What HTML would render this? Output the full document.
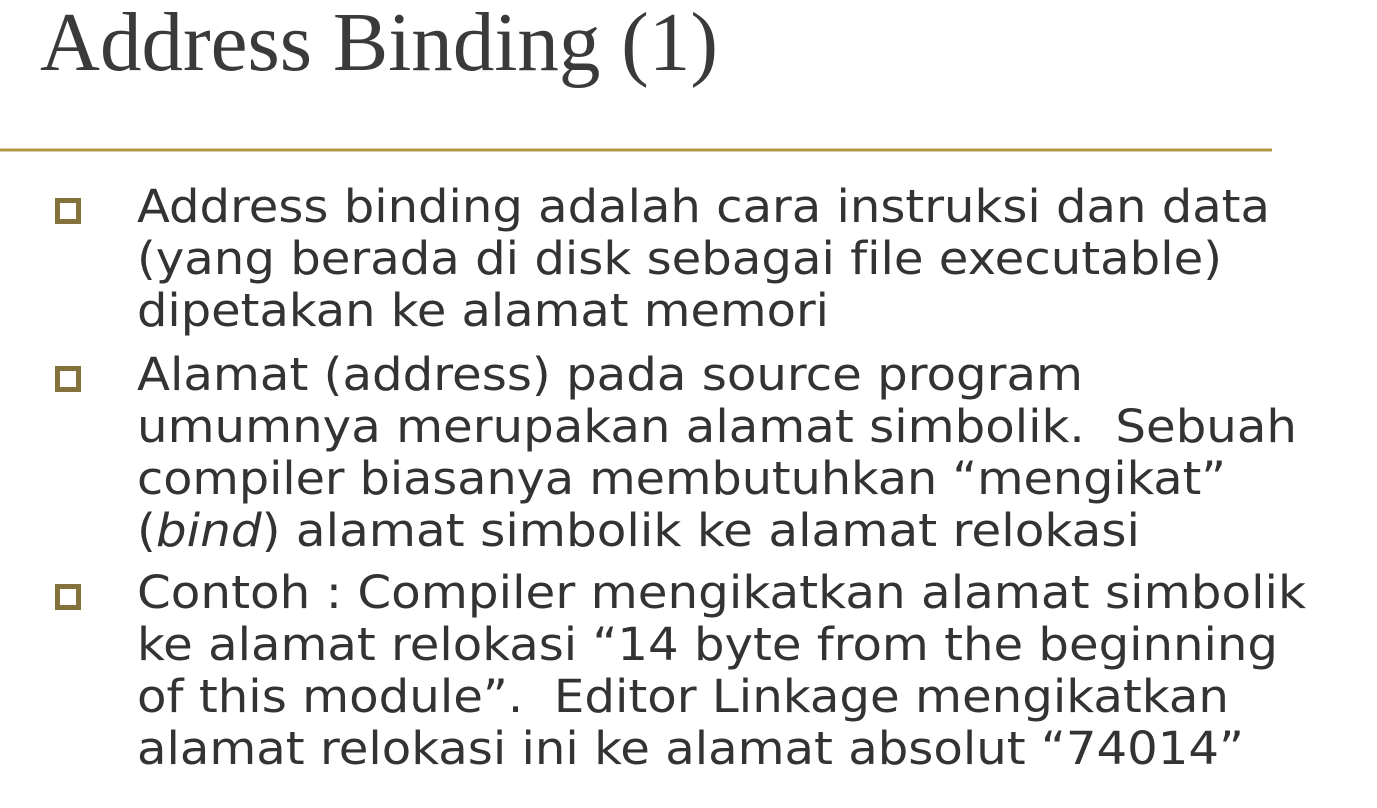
<!DOCTYPE html>
<html><head><meta charset="utf-8"><style>
html,body{margin:0;padding:0;background:#fff;width:1377px;height:808px;overflow:hidden}
text{font-variant-ligatures:none}
</style></head><body>
<svg width="1377" height="808" xmlns="http://www.w3.org/2000/svg">
<text x="40" y="70" font-family="Liberation Serif, serif" font-size="84" fill="#3a3a3a" textLength="678" lengthAdjust="spacingAndGlyphs">Address Binding (1)</text>
<rect x="0" y="148.5" width="1272" height="3" fill="#b09a44"/>
<g fill="none" stroke="#85713a" stroke-width="5">
<rect x="57.5" y="200.5" width="21" height="21"/>
<rect x="57.5" y="368.5" width="21" height="21"/>
<rect x="57.5" y="586.5" width="21" height="21"/>
</g>
<g font-family="DejaVu Sans, Liberation Sans, sans-serif" font-size="45" fill="#333">
<text x="137" y="222" textLength="1133" lengthAdjust="spacingAndGlyphs">Address binding adalah cara instruksi dan data</text>
<text x="137" y="274" textLength="1085" lengthAdjust="spacingAndGlyphs">(yang berada di disk sebagai file executable)</text>
<text x="137" y="326" textLength="692" lengthAdjust="spacingAndGlyphs">dipetakan ke alamat memori</text>
<text x="137" y="390" textLength="946" lengthAdjust="spacingAndGlyphs">Alamat (address) pada source program</text>
<text x="137" y="442" textLength="1160" lengthAdjust="spacingAndGlyphs" xml:space="preserve">umumnya merupakan alamat simbolik.  Sebuah</text>
<text x="137" y="494" textLength="1089" lengthAdjust="spacingAndGlyphs">compiler biasanya membutuhkan “mengikat”</text>
<text x="137" y="546" textLength="1003" lengthAdjust="spacingAndGlyphs">(<tspan font-style="italic">bind</tspan>) alamat simbolik ke alamat relokasi</text>
<text x="137" y="608" textLength="1169" lengthAdjust="spacingAndGlyphs">Contoh : Compiler mengikatkan alamat simbolik</text>
<text x="137" y="660" textLength="1141" lengthAdjust="spacingAndGlyphs">ke alamat relokasi “14 byte from the beginning</text>
<text x="137" y="712" textLength="1092" lengthAdjust="spacingAndGlyphs" xml:space="preserve">of this module”.  Editor Linkage mengikatkan</text>
<text x="137" y="764" textLength="1107" lengthAdjust="spacingAndGlyphs">alamat relokasi ini ke alamat absolut “74014”</text>
</g>
</svg>
</body></html>
